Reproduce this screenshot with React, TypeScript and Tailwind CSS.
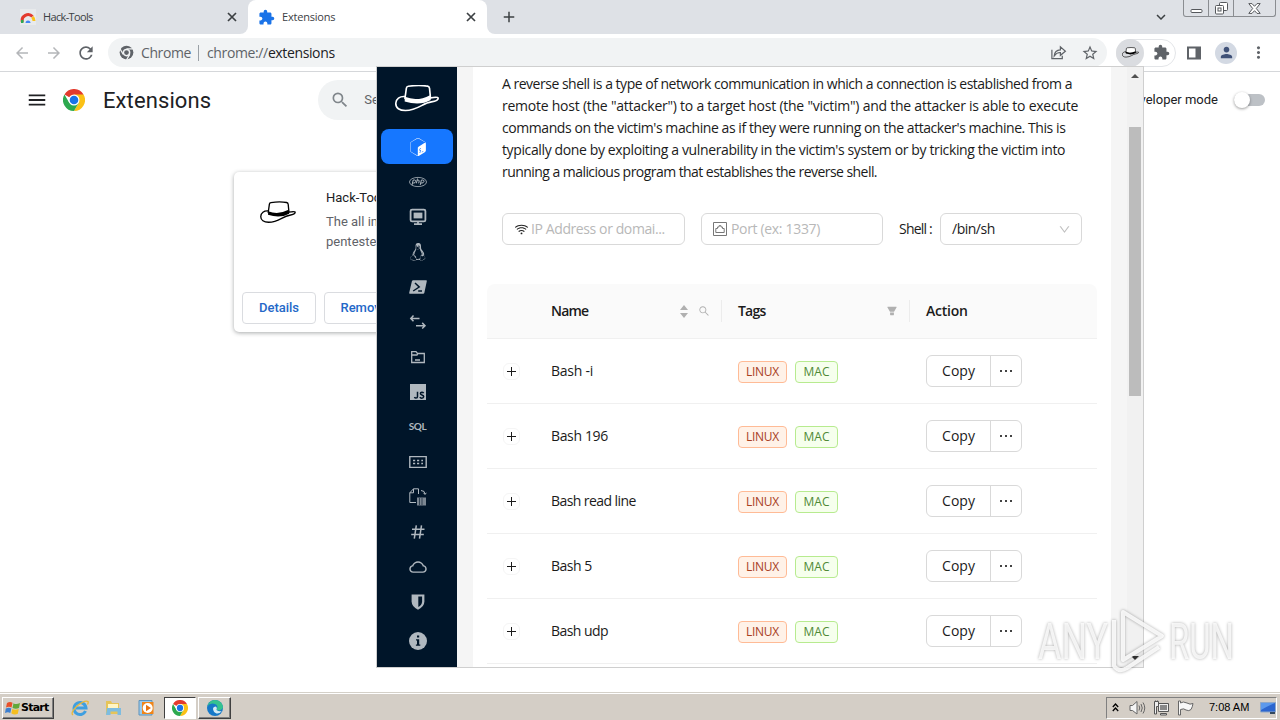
import type { ReactNode } from "react";
import { AiOutlineWifi, AiOutlineSearch, AiFillFilter, AiOutlineDown, AiOutlineCloud } from "react-icons/ai";
import { MdArrowBack, MdArrowForward, MdRefresh, MdAdd, MdSearch, MdExtension, MdStarBorder, MdMoreVert, MdPerson, MdMenu, MdExpandMore } from "react-icons/md";
import { SiGnubash, SiLinux } from "react-icons/si";

function Hat({ className, brim = "#fff" }: { className?: string; brim?: string }) {
  return (
    <svg viewBox="0 0 46 28" className={className} fill="none" stroke="currentColor" strokeWidth="1.7" strokeLinejoin="round" strokeLinecap="round">
      <path d="M10.5 14 12 3.2Q12.300 1.500 14 1.300Q25 -.2 34 1.200Q35.800 1.500 36 3.500L37 13.500" fill={brim} />
      <path d="M10.500 12.300Q23 17.500 36.500 10.500L37.300 15.500Q26 22 10.200 17Z" fill="currentColor" stroke="none" />
      <path d="M10.500 12C5 11.500 1.200 14.500 1 19C.8 24 5 26.500 11 26.500C24 26.400 29 18.500 38 17.500C42 17 45 15.500 45 13.500C44.500 12.200 40.500 12.800 36.500 13.500" />
    </svg>
  );
}

function CloseIcon({ className }: { className?: string }) {
  return (
    <svg viewBox="0 0 14 14" className={className} stroke="currentColor" strokeWidth="1.700">
      <path d="M3 3 11 11M11 3 3 11" />
    </svg>
  );
}

function ChromeLogo({ className }: { className?: string }) {
  return (
    <svg viewBox="0 0 24 24" className={className}>
      <circle cx="12" cy="12" r="12" fill="#fff" />
      <path d="M12 12 1.600 6A12 12 0 0 1 22.400 6Z" fill="#e33b2e" />
      <path d="M12 6H22.400A12 12 0 0 1 12 24L17.200 15Z" fill="#fbc116" />
      <path d="M6.800 15 1.600 6A12 12 0 0 0 12 24L17.200 15Z" fill="#2da94f" />
      <circle cx="12" cy="12" r="6" fill="#fff" />
      <circle cx="12" cy="12" r="4.700" fill="#1a73e8" />
    </svg>
  );
}

const sideIcons: ReactNode[] = [
  <svg key="php" viewBox="0 0 18 18" className="size-[18px]" fill="none" stroke="currentColor" strokeWidth=".8">
    <ellipse cx="9" cy="9" rx="8.500" ry="4.600" />
    <path d="M3 12 4.200 7H5.700Q7.200 7.200 6.700 8.700Q6.200 10 4.800 10H3.600M8.500 5.500 7.400 10.300M8.200 7.300Q10.300 6.500 10.200 8L9.700 10.300M11.200 12 12.400 7H13.900Q15.400 7.200 14.900 8.700Q14.400 10 13 10H11.800" strokeWidth="1" />
  </svg>,
  <svg key="tty" viewBox="0 0 18 18" className="size-[18px]" fill="none" stroke="currentColor" strokeWidth="1.800">
    <rect x="1.600" y="1.600" width="14.800" height="11.800" rx="1.500" />
    <rect x="4.600" y="4.600" width="8.800" height="5.800" fill="currentColor" stroke="none" />
    <path d="M9 13V16M5 16.200H13" />
  </svg>,
  <SiLinux key="linux" className="size-[18px]" />,
  <svg key="ps" viewBox="0 0 18 18" className="size-[18px]">
    <path d="M4.200 2.300H17.200Q18 2.400 17.800 3.200L15.300 14.900Q15.100 15.700 14.200 15.700H.8Q0 15.600.2 14.800L2.900 3.200Q3.200 2.300 4.200 2.300Z" fill="currentColor" />
    <path d="M6 5 10.200 9 4.200 13M9.200 13H13" fill="none" stroke="#001529" strokeWidth="1.500" />
  </svg>,
  <svg key="swap" viewBox="0 0 18 18" className="size-[18px]" fill="none" stroke="currentColor" strokeWidth="1.500">
    <path d="M1.800 5.400H10.500M4.500 2.600 1.800 5.400 4.500 8.200M7 12.700H15.800M13.200 9.900 16 12.700 13.200 15.500" />
  </svg>,
  <svg key="folder" viewBox="0 0 18 18" className="size-[18px]" fill="none" stroke="currentColor" strokeWidth="1.300">
    <path d="M2.700 14.500V3.600H7L8.500 5.500H15.300V14.500ZM2.700 7H8L9 5.500M6 12H11" />
  </svg>,
  <svg key="js" viewBox="0 0 18 18" className="size-[18px]">
    <path d="M1 1H17V17H1Z" fill="currentColor" />
    <path d="M8.500 8.700V13.500Q8.500 15.100 7 15.100Q5.900 15.100 5.500 14M14.700 10.100Q14 9.200 12.900 9.200Q11.400 9.300 11.400 10.500Q11.400 11.500 13 12Q14.800 12.500 14.700 13.700Q14.500 15.200 12.800 15.200Q11.400 15.100 10.900 14" fill="none" stroke="#001529" strokeWidth="1.500" />
  </svg>,
  <span key="sql" className="-mt-[2px] -ml-px font-['Lato'] text-[10px] leading-[18px] font-bold -tracking-[0.5px]">SQL</span>,
  <svg key="b64" viewBox="0 0 18 18" className="size-[18px]" fill="none" stroke="currentColor" strokeWidth="1.400">
    <path d="M.8 3.600H17.200V14.400H.8ZM4 7.500H6.200M8 7.500H10.200M12.300 7.500H14M4 10.500H6.200M8 10.500H10.200M12.300 10.500H14" />
  </svg>,
  <svg key="file" viewBox="0 0 18 18" className="size-[18px]" fill="none" stroke="currentColor" strokeWidth="1">
    <path d="M7 14.500H.8V4.800L4.500.8H9.500V6M4.500.8V4.800H.8M12 2.500Q16 2.600 16 6M14.500 4.800 16 6.500 17.300 4.800" />
    <path d="M8 9.500H17V17.500H8Z" fill="currentColor" stroke="none" opacity=".7" />
    <path d="M10.500 10V17M13 10V17" stroke="#001529" strokeWidth=".6" />
  </svg>,
  <svg key="hash" viewBox="0 0 18 18" className="size-[18px]" fill="none" stroke="currentColor" strokeWidth="1.500">
    <path d="M7.300 2.300 5.300 15.700M12.500 2.300 10.500 15.700M3 6.300H15.500M2.200 11.600H14.800" />
  </svg>,
  <AiOutlineCloud key="cloud" className="size-[20px]" />,
  <svg key="shield" viewBox="0 0 18 18" className="size-[18px]">
    <path d="M2.600 1.400H15.400V8.500Q15.200 13.800 9 16.700Q2.800 13.800 2.600 8.500Z" fill="currentColor" />
    <path d="M9.300 3.600H13.100V8.700Q12.900 12 9.300 14Z" fill="#001529" />
  </svg>,
];

const winBtn = "flex items-center justify-center";

function TabStrip() {
  return (
    <div className="flex h-[34px] shrink-0 bg-white text-[11px] text-[#3c4043]">
      <div className="flex w-[248px] items-center rounded-br-[8px] bg-[#dee1e6] pl-[20px] pr-[9px]">
        <svg viewBox="0 0 16 16" className="size-[16px] bg-[#e8eaec]" fill="none" strokeWidth="3">
          <path d="M2.300 13A6 6 0 0 1 12.500 7.500" stroke="#e33b2e" />
          <path d="M12.500 8A6 6 0 0 1 14 12" stroke="#fbc116" />
          <path d="M1 12.500H3.500" stroke="#2da94f" />
          <path d="M5.500 14A2.500 2.500 0 0 1 10.500 14Z" fill="#4285f4" />
        </svg>
        <span className="ml-[7px] tracking-[-0.65px]">Hack-Tools</span>
        <CloseIcon className="ml-auto size-[14px]" />
      </div>
      <div className="flex w-[239px] bg-[#dee1e6]">
        <div className="flex flex-1 items-center rounded-t-[8px] bg-white pl-[10px] pr-[9px]">
          <MdExtension className="size-[17px] text-[#1a73e8]" />
          <span className="ml-[7px] tracking-[-0.2px]">Extensions</span>
          <CloseIcon className="ml-auto size-[14px]" />
        </div>
      </div>
      <div className="flex flex-1 items-center rounded-bl-[8px] bg-[#dee1e6] pl-[13px]">
        <MdAdd className="size-[18px]" />
        <MdExpandMore className="ml-auto mr-[13px] size-[18px]" />
        <div className="mr-[4px] flex h-[17px] w-[93px] self-start rounded-b-[3px] border border-t-0 border-[#8a8d91] text-[#55585c]">
          <div className={`${winBtn} w-[25px] border-r border-[#8a8d91]`}>
            <svg viewBox="0 0 13 13" className="mt-[2px] size-[13px]" fill="#fff" stroke="currentColor"><rect x="1" y="6.500" width="11" height="3" rx="1" /></svg>
          </div>
          <div className={`${winBtn} w-[25px] border-r border-[#8a8d91]`}>
            <svg viewBox="0 0 13 13" className="size-[13px]" fill="#fff" stroke="currentColor"><rect x="4.500" y=".5" width="8" height="8" rx="1" /><rect x=".5" y="3.500" width="8" height="8.500" rx="1" /><rect x="3" y="6" width="3" height="3" /></svg>
          </div>
          <div className={`${winBtn} flex-1`}>
            <svg viewBox="0 0 13 11" className="h-[11px] w-[13px]" fill="#fff" stroke="currentColor"><path d="M.8.6H4L6.500 3.300 9 .6H12.200L8.300 5.500 12.200 10.400H9L6.500 7.700 4 10.400H.8L4.700 5.500Z" /></svg>
          </div>
        </div>
      </div>
    </div>
  );
}

function Toolbar() {
  return (
    <div className="flex h-[38px] shrink-0 items-center border-b border-[#d5d7da] bg-white pl-[13px] pr-[13px] text-[#5f6368]">
      <MdArrowBack className="size-[18px] text-[#b4b6b9]" />
      <MdArrowForward className="ml-[14px] size-[18px] text-[#b4b6b9]" />
      <MdRefresh className="ml-[13px] size-[20px]" />
      <div className="ml-[12px] flex h-[29px] w-[999px] items-center rounded-full bg-[#f1f3f4] pl-[11px] pr-[8px] text-[14px]">
        <svg viewBox="0 0 24 24" className="size-[15px]">
          <circle cx="12" cy="12" r="11" fill="#5f6368" />
          <path d="M12 6H22M6.800 15 1.500 6M17.200 15 12 24" stroke="#f1f3f4" strokeWidth="2" />
          <circle cx="12" cy="12" r="5" fill="#5f6368" stroke="#f1f3f4" strokeWidth="2.400" />
        </svg>
        <span className="ml-[7px] w-[50px] tracking-[-0.4px]">Chrome</span>
        <span className="ml-[7px] mr-[8px] h-[16px] w-px bg-[#9aa0a6]" />
        <span className="whitespace-pre tracking-[-0.37px]">chrome://<span className="text-[#202124]">extensions</span></span>
        <svg viewBox="0 0 18 18" className="ml-auto size-[17px]" fill="none" stroke="currentColor" strokeWidth="1.300">
          <path d="M2 6V15.500H13V12.500M4.500 12.500Q5 6.500 11 6.300V3L16.300 7.600 11 12V9Q7 8.800 4.500 12.500Z" />
        </svg>
        <MdStarBorder className="ml-[14px] size-[18px]" />
      </div>
      <div className="ml-[9px] flex h-[28px] w-[60px] items-center rounded-full border border-[#e3e5e8]">
        <div className="-ml-px flex size-[28px] shrink-0 items-center justify-center rounded-full bg-[#dadce0] text-black"><Hat className="h-[11px] w-[17px]" /></div>
        <MdExtension className="ml-[9px] size-[17px] shrink-0" />
      </div>
      <svg viewBox="0 0 16 16" className="ml-[10px] size-[16px]"><path d="M1 1.500H15V14.500H1ZM3 3.500V12.500H9.500V3.500Z" fill="currentColor" fillRule="evenodd" /></svg>
      <div className="ml-[13px] flex size-[22px] items-center justify-center rounded-full bg-[#d3d9e3]"><MdPerson className="size-[17px] text-[#3f5178]" /></div>
      <MdMoreVert className="ml-auto -mr-px size-[19px]" />
    </div>
  );
}

function ExtensionsPage() {
  return (
    <div className="flex flex-1 flex-col bg-white font-['Roboto',sans-serif] text-[#202124]">
      <div className="flex h-[56px] items-center pl-[26px] pr-[15px]">
        <MdMenu className="size-[22px]" />
        <ChromeLogo className="ml-[15px] size-[22px]" />
        <h1 className="ml-[18px] text-[22px] tracking-[0.1px]">Extensions</h1>
        <div className="ml-[107px] flex h-[40px] w-[500px] items-center rounded-full bg-[#f1f3f4] pl-[12px] text-[13px] text-[#5f6368]">
          <MdSearch className="size-[20px] text-[#80868b]" />
          <span className="ml-[14px]">Search extensions</span>
        </div>
        <span className="ml-auto text-[13px]">Developer mode</span>
        <div className="ml-[16px] flex h-[12px] w-[31px] items-center rounded-full bg-[#bdc1c6]">
          <div className="size-[16px] shrink-0 rounded-full bg-white shadow-[0_1px_3px_rgba(0,0,0,0.4)]" />
        </div>
      </div>
      <div className="ml-[234px] mt-[44px] flex h-[160px] w-[400px] flex-col rounded-[5px] bg-white shadow-[0_1px_4px_rgba(60,64,67,0.45)]">
        <div className="flex flex-1 pt-[16px]">
          <Hat className="ml-[26px] mt-[13px] h-[23px] w-[36px] text-black" />
          <div className="ml-[30px] flex flex-col text-[13px] leading-[20px]">
            <span>Hack-Tools</span>
            <span className="mt-[4px] text-[#5f6368]">The all in one Red team<br />pentester extension</span>
          </div>
        </div>
        <div className="flex gap-[8px] pb-[8px] pl-[8px] text-[13px] font-medium text-[#2468c8]">
          <div className="flex h-[32px] w-[74px] items-center justify-center rounded-[4px] border border-[#dadce0]">Details</div>
          <div className="flex h-[32px] w-[80px] items-center justify-center rounded-[4px] border border-[#dadce0]">Remove</div>
        </div>
      </div>
    </div>
  );
}

const rows = [
  { name: "Bash -i", spacing: "tracking-[-0.25px]" },
  { name: "Bash 196", spacing: "tracking-[-0.35px]" },
  { name: "Bash read line", spacing: "tracking-[-0.57px]" },
  { name: "Bash 5", spacing: "tracking-[-0.5px]" },
  { name: "Bash udp", spacing: "tracking-[-0.55px]" },
];

function Popup() {
  return (
    <div className="absolute left-[376px] top-[66px] flex h-[602px] w-[768px] border border-[#cfcfcf] bg-[#f5f5f5] text-[14px] text-[#1b1b1b]">
      <nav className="flex w-[80px] shrink-0 flex-col items-center bg-[#001529] text-[#b0b8bf]">
        <Hat className="-ml-px mt-[18px] h-[27px] w-[46px] text-white" brim="#001529" />
        <div className="mt-[17px] flex h-[35px] w-[72px] items-center justify-center rounded-[8px] bg-[#1677ff] pl-[2px] text-white"><SiGnubash className="size-[18px]" /></div>
        {sideIcons.map((icon, i) => (
          <div key={i} className="flex h-[35px] items-center justify-center pl-[2px]">{icon}</div>
        ))}
        <svg viewBox="0 0 18 18" className="ml-[2px] mt-[13px] size-[18px]">
          <circle cx="9" cy="9" r="9" fill="currentColor" />
          <path d="M8 3.500H10.200V5.500H8ZM7 7.200H10.200V12.500H11.300V13.800H6.900V12.500H8V8.400H7Z" fill="#001529" />
        </svg>
      </nav>
      <main className="ml-[16px] flex w-[638px] flex-col overflow-hidden bg-white">
        <div className="ml-[29px] mt-[6px] flex flex-col whitespace-nowrap leading-[22px]">
          <span className="tracking-[-0.49px]">A reverse shell is a type of network communication in which a connection is established from a</span>
          <span className="tracking-[-0.24px]">remote host (the "attacker") to a target host (the "victim") and the attacker is able to execute</span>
          <span className="tracking-[-0.43px]">commands on the victim's machine as if they were running on the attacker's machine. This is</span>
          <span className="tracking-[-0.375px]">typically done by exploiting a vulnerability in the victim's system or by tricking the victim into</span>
          <span className="tracking-[-0.55px]">running a malicious program that establishes the reverse shell.</span>
        </div>
        <div className="ml-[29px] mt-[30px] flex h-[32px] items-center text-[#b8b8b8]">
          <div className="flex h-full w-[183px] items-center rounded-[6px] border border-[#d9d9d9] pl-[11px]">
            <AiOutlineWifi className="size-[15px] text-[#222]" />
            <span className="-mt-px ml-[2px] tracking-[-0.4px]">IP Address or domai...</span>
          </div>
          <div className="ml-[16px] flex h-full w-[182px] items-center rounded-[6px] border border-[#d9d9d9] pl-[11px]">
            <svg viewBox="0 0 14 14" className="size-[14px] text-[#777]" fill="none" stroke="currentColor"><path d="M.5.5H13.500V13.500H.5ZM2.800 10.500V6.500H4.500V5H6V3.700H8V5H9.500V6.500H11.200V10.500Z" /></svg>
            <span className="-mt-px ml-[4px] tracking-[-0.33px]">Port (ex: 1337)</span>
          </div>
          <span className="-mt-px ml-[16px] w-[41px] whitespace-nowrap tracking-[-0.8px] text-[#1b1b1b]">Shell :</span>
          <div className="flex h-full w-[142px] items-center rounded-[6px] border border-[#d9d9d9] pl-[11px] pr-[10px] tracking-[-0.5px] text-[#1b1b1b]">
            <span className="-mt-px">/bin/sh</span>
            <AiOutlineDown className="ml-auto size-[13px] text-[#bfbfbf]" />
          </div>
        </div>
        <div className="ml-[14px] mt-[39px] flex w-[610px] flex-col">
          <div className="flex h-[55px] items-center rounded-t-[8px] border-b border-[#f0f0f0] bg-[#fafafa] pl-[64px] font-semibold text-[#1b1b1b]">
            <span className="-mt-[2px] w-[126px] tracking-[-0.8px]">Name</span>
            <div className="flex w-[14px] flex-col items-center text-[#b0b0b0]">
              <svg viewBox="0 0 8 13" className="h-[13px] w-[8px]" fill="currentColor"><path d="M4 0 8 5H0ZM0 8H8L4 13Z" /></svg>
            </div>
            <AiOutlineSearch className="ml-[7px] size-[12px] text-[#b0b0b0]" />
            <span className="ml-[11px] mr-[16px] h-[22px] w-px bg-[#ececec]" />
            <span className="-mt-[2px] w-[148px] tracking-[-0.8px]">Tags</span>
            <AiFillFilter className="size-[12px] text-[#b0b0b0]" />
            <span className="ml-[11px] mr-[16px] h-[22px] w-px bg-[#ececec]" />
            <span className="-mt-[2px] tracking-[-0.25px]">Action</span>
          </div>
          {rows.map(({ name, spacing }) => (
            <div key={name} className="flex h-[65px] items-center border-b border-[#f0f0f0] pl-[16px]">
              <div className="flex size-[17px] items-center justify-center rounded-[6px] border border-[#f5f5f5]">
                <svg viewBox="0 0 9 9" className="size-[9px]" stroke="currentColor"><path d="M0 4.500H9M4.500 0V9" /></svg>
              </div>
              <span className={`-mt-[2px] ml-[31px] w-[187px] ${spacing}`}>{name}</span>
              <span className="mt-[2px] flex h-[22px] w-[49px] items-center justify-center rounded-[4px] border border-[#ffbb96] bg-[#fff2e8] text-[12px] tracking-[-0.3px] text-[#a8401f]">LINUX</span>
              <span className="ml-[8px] mt-[2px] flex h-[22px] w-[43px] items-center justify-center rounded-[4px] border border-[#b7eb8f] bg-[#f6ffed] text-[12px] text-[#4f8a35]">MAC</span>
              <div className="ml-[88px] flex h-[32px] w-[96px] rounded-[6px] border border-[#d9d9d9]">
                <span className="flex w-[64px] items-center justify-center border-r border-[#d9d9d9] pb-[2px]">Copy</span>
                <span className="flex flex-1 items-center justify-center">
                  <svg viewBox="0 0 12 2" className="h-[2px] w-[12px]" fill="#444"><path d="M0 0H2V2H0ZM5 0H7V2H5ZM10 0H12V2H10Z" /></svg>
                </span>
              </div>
            </div>
          ))}
        </div>
      </main>
      <div className="ml-auto flex w-[16px] flex-col items-center bg-[#f1f1f1] text-[#505050]">
        <svg viewBox="0 0 8 4" className="mt-[7px] h-[4px] w-[8px]" fill="currentColor"><path d="M4 0 8 4H0Z" /></svg>
        <div className="mt-[49px] h-[269px] w-[12px] bg-[#bcbcbc]" />
        <svg viewBox="0 0 8 4" className="mb-[7px] mt-auto h-[4px] w-[8px]" fill="#333"><path d="M0 0H8L4 4Z" /></svg>
      </div>
    </div>
  );
}

function Taskbar() {
  const raised = "border border-b-[#404040] border-l-white border-r-[#404040] border-t-white shadow-[inset_-1px_-1px_#808080]";
  return (
    <div className="flex h-[28px] shrink-0 items-center border-t border-[#d4d0c8] bg-[#d4cec6] shadow-[inset_0_1px_#fff] font-['Liberation_Sans',sans-serif] text-[11px] text-black">
      <div className={`ml-[2px] mt-[2px] flex h-[22px] w-[52px] items-center pl-[2px] ${raised}`}>
        <svg viewBox="0 0 16 16" className="size-[16px] shrink-0">
          <path d="M2 3Q5 1 7.500 2.800L6.500 7.500Q4 6 1 7.500Z" fill="#e8502a" />
          <path d="M8.500 3.200Q11 5 15 3L14 8Q11 9.500 7.500 8Z" fill="#62a83a" />
          <path d="M.8 8.500Q4 7 6.300 8.500L5.300 13Q3 11.500 0 13Z" fill="#3c7fd0" />
          <path d="M7.300 9Q10 10.500 13.800 9L12.800 13.700Q9.500 15.500 6.300 13.300Z" fill="#f5be20" />
        </svg>
        <span className="mt-px font-['DejaVu_Sans',sans-serif] text-[11px] font-bold tracking-[-0.75px]">Start</span>
      </div>
      <svg viewBox="0 0 18 18" className="ml-[17px] mt-[2px] size-[18px]" fill="none">
        <path d="M14.500 12A6 6 0 1 1 15 9H5" stroke="#3f9fe0" strokeWidth="3" />
        <path d="M2 16Q-1 14 6 7Q14 .5 17 2.500Q17.500 4 16.500 5.500" stroke="#e9b83a" strokeWidth="1.300" />
      </svg>
      <svg viewBox="0 0 18 18" className="ml-[15px] mt-[2px] size-[18px]">
        <path d="M2 2H7L8 4H15V15H2Z" fill="#e6c458" />
        <path d="M4 5H14V9H4Z" fill="#fff5c4" />
        <path d="M3 9H17V16H13.500V12.500H6.500V16H2Z" fill="#7dbce0" />
      </svg>
      <svg viewBox="0 0 18 18" className="ml-[16px] mt-[2px] size-[18px]">
        <path d="M1 1.500H14V16H1Z" fill="#9ccbea" stroke="#5c93bd" />
        <path d="M4 3H15.500V15H4Z" fill="#f08519" />
        <circle cx="9.700" cy="9" r="5" fill="#fff" />
        <path d="M8 5.800 13 9 8 12.200Z" fill="#e87410" />
      </svg>
      <div className="ml-[8px] mt-[2px] flex h-[22px] w-[32px] items-center justify-center border border-b-white border-l-[#404040] border-r-white border-t-[#404040] bg-white"><ChromeLogo className="size-[16px]" /></div>
      <div className={`ml-[2px] mt-[2px] flex h-[22px] w-[33px] items-center justify-center ${raised}`}>
        <svg viewBox="0 0 16 16" className="size-[16px]">
          <circle cx="8" cy="8" r="8" fill="#1678c8" />
          <path d="M.3 6.500Q3 2.500 8 4Q12 6 9.500 9.500Q13 12 16 8Q15.500.5 8 0Q2 .3.3 6.500Z" fill="#35c28f" />
          <path d="M6 9Q6 6.500 9 6.500Q10.500 7.500 9.500 10Q12 12 14.800 11Q12.500 14 9.500 13.500Q6.500 12.500 6 9Z" fill="#d4ebf5" />
        </svg>
      </div>
      <div className="ml-auto mr-[3px] mt-[2px] flex h-[22px] w-[171px] items-center border border-b-white border-l-[#808080] border-r-white border-t-[#808080] pl-[5px]">
        <svg viewBox="0 0 7 9" className="h-[9px] w-[7px]" fill="none" stroke="currentColor" strokeWidth="1.300"><path d="M.8 4 3.500 1 6.200 4M.8 8 3.500 5 6.200 8" /></svg>
        <svg viewBox="0 0 17 16" className="ml-[10px] h-[16px] w-[17px]" fill="#f5f5f5" stroke="#666"><path d="M1 5.500H3.500L8 1.500V14L3.500 10.500H1Z" /><path d="M10 5.500Q11.500 8 10 10.500M12 4Q14.500 8 12 12M14 2.500Q17.500 8 14 13.500" fill="none" /></svg>
        <svg viewBox="0 0 17 16" className="ml-[7px] h-[16px] w-[17px]" fill="#eee" stroke="#555"><path d="M5.500 3.500H15.500V11.500H5.500ZM7.500 13.500H13.500V15H7.500Z" /><path d="M7 5H14V10H7Z" fill="#888" stroke="none" /><path d="M1.500 1.500H5.500V6.500H3.500V14H1.500ZM2.500.5V2M4.500.5V2" /></svg>
        <svg viewBox="0 0 17 16" className="ml-[7px] h-[16px] w-[17px]" fill="#f8f8f8" stroke="#666"><path d="M1.500 1V15H3.500V9.500Q7 8 9 10Q12 11.500 14 9.500Q15.500 7 16 3.500Q13 5 10 3Q6 1 3.500 3V1Z" /></svg>
        <span className="ml-[15px] w-[43px] whitespace-nowrap">7:08 AM</span>
        <svg viewBox="0 0 16 14" className="ml-[8px] h-[14px] w-[16px] shrink-0"><path d="M.5 1.500H15.500V11H.5Z" fill="#2c66cf" stroke="#8fa8c8" /><path d="M1 2H15Q8 5 1 9Z" fill="#5c99ec" /><path d="M10 11H15V13H10Z" fill="#34495e" /></svg>
      </div>
    </div>
  );
}

function Watermark() {
  return (
    <svg viewBox="0 0 204 70" className="absolute left-[1036px] top-[605px] h-[70px] w-[204px] overflow-visible [filter:drop-shadow(0_0_1.500px_rgba(0,0,0,0.4))]" fontFamily="Roboto, sans-serif" fontSize="50">
      <g fill="#fff" fillOpacity=".8">
        <text x="2" y="54" textLength="70" lengthAdjust="spacingAndGlyphs">ANY</text>
        <text x="133" y="54" textLength="65" lengthAdjust="spacingAndGlyphs">RUN</text>
      </g>
      <g fill="none" stroke="#fff" strokeOpacity=".85" strokeWidth="4" strokeLinejoin="round">
        <path d="M87 7 126 31 87 55Z" />
        <path d="M78 15V61Q83 68 91 63L123 42" />
      </g>
    </svg>
  );
}

export default function App() {
  return (
    <div className="relative flex h-[720px] w-[1280px] flex-col overflow-hidden bg-white font-['Open_Sans',sans-serif]">
      <TabStrip />
      <Toolbar />
      <ExtensionsPage />
      <Taskbar />
      <Popup />
      <Watermark />
    </div>
  );
}
